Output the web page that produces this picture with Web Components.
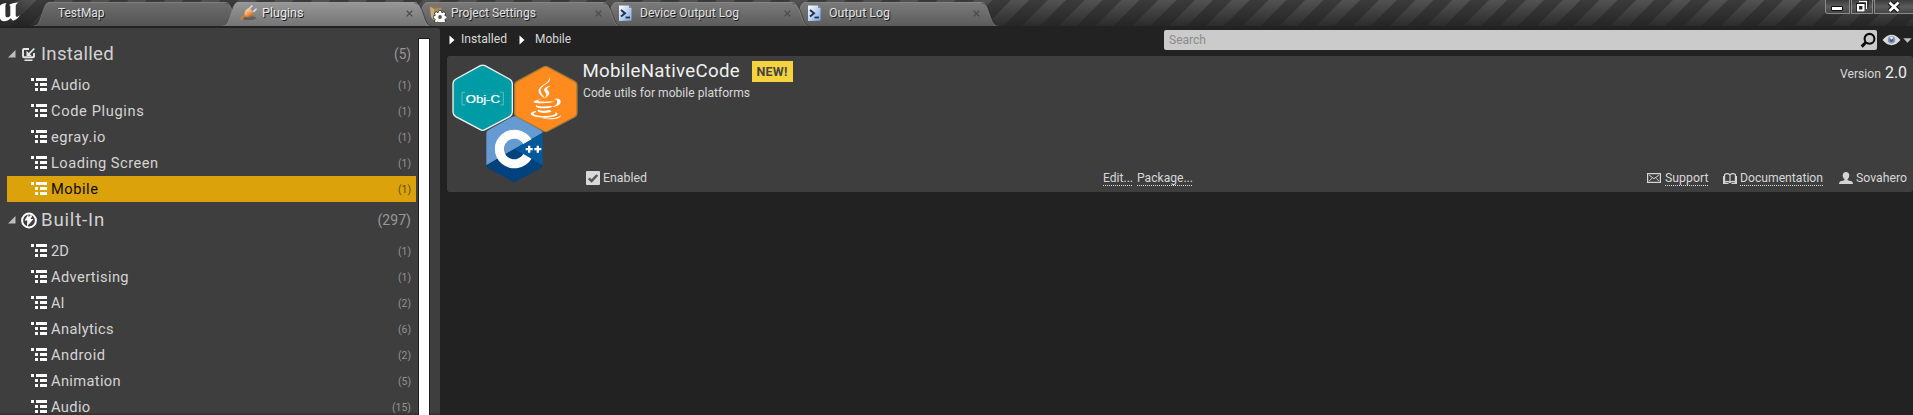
<!DOCTYPE html>
<html lang="en">
<head>
<meta charset="utf-8">
<title>Plugins</title>
<style>
html,body{margin:0;height:100%;overflow:hidden;background:#222}
body{font-family:Roboto,"Noto Sans",sans-serif;font-size:12.6px;color:#d8d8d8}
</style>
</head>
<body>
<plugin-window></plugin-window>
<script>
const define = (name, html, setup) => {
  const tpl = document.createElement('template');
  tpl.innerHTML = html;
  customElements.define(name, class extends HTMLElement {
    constructor() {
      super();
      this.attachShadow({mode: 'open'}).append(tpl.content.cloneNode(true));
    }
    connectedCallback() { if (setup) setup(this, this.shadowRoot); }
  });
};

/* A label with a fixed measure: tracked out or condensed to its width. */
class UiText extends HTMLElement {
  connectedCallback() {
    const root = this.shadowRoot || this.attachShadow({mode: 'open'});
    root.innerHTML = `<style>
      :host{display:block;flex:none;white-space:pre;line-height:1.2}
      span{display:inline-block;transform-origin:0 50%}
    </style><span></span>`;
    const span = root.querySelector('span');
    const text = this.getAttribute('text');
    span.textContent = text;
    const w = parseFloat(this.getAttribute('w'));
    if (!w) return;
    const natural = span.getBoundingClientRect().width;
    this.style.width = w + 'px';
    if (natural < w) span.style.letterSpacing = (w - natural) / text.length + 'px';
    else span.style.transform = `scaleX(${w / natural})`;
  }
}
customElements.define('ui-text', UiText);

const icons = {
  plug: `<svg width="18" height="16" viewBox="0 0 18 16"><defs><linearGradient id="o" x1="0" y1="0" x2=".6" y2="1"><stop offset="0" stop-color="#ffe0b8"/><stop offset=".5" stop-color="#f5b070"/><stop offset="1" stop-color="#b8601c"/></linearGradient></defs><ellipse cx="9" cy="13" rx="7" ry="2" fill="#222" opacity=".35"/><path d="M1.5 13.5L5.5 10" stroke="#d9802c" stroke-width="2.2" stroke-linecap="round"/><path d="M9.3 3.8L11.8 1M13 7.2L16 4.2" stroke="#c9ddf5" stroke-width="1.7" stroke-linecap="round"/><path d="M5 10.6C3.3 7.5 6.2 3.6 9.3 3L14 7.5C13.6 10.8 9.5 13.5 6 12Z" fill="url(#o)"/></svg>`,
  settings: `<svg width="18" height="17" viewBox="0 0 18 17"><path d="M1 1.5L9 .5L10 2L12.5 2.5L12 13L5 15.5L2 12Z" fill="#8d7550"/><path d="M1 1.5L5 4V15.5L2 12Z" fill="#c9ad7d"/><path d="M5 4L12.5 2.5L12 13L5 15.5Z" fill="#a58d66"/><g stroke="#222" stroke-width="1.2" paint-order="stroke" fill="#fff"><path d="M10 6h2l.4 1.6 1.1.5L15 7.2l1.3 1.3-.8 1.4.5 1.1 1.6.4v2l-1.6.4-.5 1.1.8 1.4-1.3 1.3-1.5-.8-1 .4-.5 1h-2l-.4-1.2-1.1-.4-1.4.9-1.3-1.4.8-1.4-.4-1-1.6-.4v-2l1.6-.4.4-1.1-.8-1.4L7.100 7.100l1.400.9 1.100-.4z"/></g><circle cx="11" cy="12" r="1.900" fill="#555"/></svg>`,
  log: `<svg width="14" height="17" viewBox="0 0 14 17"><defs><linearGradient id="l" x1="0" y1="0" x2="1" y2="1"><stop offset="0" stop-color="#fff"/><stop offset="1" stop-color="#7ea6e4"/></linearGradient></defs><path d="M1 .5H11L13.500 3V15.500L1 16Z" fill="url(#l)"/><path d="M11 .5V3h2.500z" fill="#6f86b5"/><path d="M3 5L7 8.200L3 11.500" fill="none" stroke="#26324e" stroke-width="2"/><path d="M7.500 12.500H12" stroke="#26324e" stroke-width="1.800"/></svg>`,
  none: ''
};

define('app-tab', `<style>
  :host{display:grid;width:210px;height:24px;margin-left:-21px;flex:none;
    --top:#7b7b7b;--bottom:#5c5c5c;--text:#e2e2e2}
  :host([muted]){--top:#6e6e6e;--bottom:#545454}
  :host([active]){--top:#989898;--bottom:#757575;--text:#eaeaea}
  .shape,.row{grid-area:1/1}
  .row{display:flex;align-items:center;box-sizing:border-box;height:24px;padding:0 19px 3px 18px}
  .icon{display:flex;width:21.500px;flex:none;padding-top:1px}
  :host([muted]) .icon{width:6.500px}
  ui-text{text-shadow:1px 1px 0 #1a1a1a;color:var(--text);font-size:12.800px}
  .close{margin-left:auto;margin-top:2px}
  :host([muted]) .close{display:none}
</style>
<svg class="shape" width="210" height="24" viewBox="0 0 210 24">
  <defs><linearGradient id="g" x1="0" y1="0" x2="0" y2="1"><stop offset="0" style="stop-color:var(--top)"/><stop offset="1" style="stop-color:var(--bottom)"/></linearGradient></defs>
  <path d="M0 24C6 24 6.500 19 9 12C11.500 5 12 -.5 18 -.5H191C197 -.5 198 5 200.500 12C203 19 204 24 210 24Z" fill="url(#g)"/>
  <path d="M0 24C6 24 6.500 19 9 12C11.500 5 12 .5 18 .5H191C197 .5 198 5 200.500 12C203 19 204 24 210 24" fill="none" stroke="#a5a5a5" stroke-opacity=".3"/>
  <path d="M192.500 1C198 1.500 199 5 201.500 12C204 19 205 23.500 210 24" fill="none" stroke="#2c2c2c" stroke-opacity=".55"/>
</svg>
<div class="row"><span class="icon"></span><ui-text></ui-text>
<svg class="close" width="7" height="7" viewBox="0 0 7 7"><path d="M.7.7l5.600 5.600M6.300.7L.7 6.300" stroke="#484848" stroke-width="1.200"/></svg></div>`,
(el, root) => {
  root.querySelector('.icon').innerHTML = icons[el.getAttribute('icon') || 'none'];
  const t = document.createElement('ui-text');
  t.setAttribute('text', el.getAttribute('label'));
  t.setAttribute('w', el.getAttribute('w'));
  root.querySelector('ui-text').replaceWith(t);
});

define('window-buttons', `<style>
  :host{display:flex;height:14px;width:88px;flex:none}
  div{display:flex;align-items:center;justify-content:center;box-sizing:border-box;height:14px;
    border:1px solid #8b8b8b;border-top:0;background:linear-gradient(#3c3c3c,#5a5a5a 50%,#454545)}
  .a{width:25px;border-bottom-left-radius:3px;margin-right:1px;padding-right:1px}.b{width:22px;margin-right:1px}.c{width:39px;border-right:0;padding-right:1px}
  svg{display:block}
</style>
<div class="a"><svg width="14" height="14" viewBox="0 0 14 14"><path d="M1.500 6.500h11v4h-11z" fill="#fff" stroke="#111"/></svg></div>
<div class="b"><svg width="14" height="14" viewBox="0 0 14 14"><path d="M4.500 1h7v7.500" fill="none" stroke="#111" stroke-width="4"/><path d="M1 3h9v9H1z" fill="#111"/><path d="M4 1.500h7.500V9" fill="none" stroke="#fff" stroke-width="1.300"/><path d="M3 5h5.500v5.500H3z" fill="#222" stroke="#fff" stroke-width="2.200"/></svg></div>
<div class="c"><svg width="14" height="14" viewBox="0 0 14 14"><path d="M2.500 2.500l9 8.500M11.500 2.500l-9 8.500" stroke="#111" stroke-width="5"/><path d="M2.500 2.500l9 8.500M11.500 2.500l-9 8.500" stroke="#fff" stroke-width="2.700"/></svg></div>`);

define('title-bar', `<style>
  :host{display:flex;height:26px;overflow:hidden;
   background:linear-gradient(rgba(30,30,30,0) 0,rgba(30,30,30,.75) 100%),
   repeating-linear-gradient(135deg,#3b3b3b 0,#3b3b3b 12.500px,#525252 13.500px,#525252 25.500px,#3b3b3b 26px)}
  .logo{width:33px;flex:none;background:linear-gradient(90deg,#2228,#2220)}
  .tabs{display:flex;padding:2px 0 0 21px;flex:1}
</style>
<div class="logo"><svg width="24" height="26" viewBox="0 0 24 26"><path d="M0 5.500C1.500 3.800 4 3.200 6.500 3.200C5.600 4.200 5.400 5 5.400 6.200V15C5.400 16.800 6.600 17.600 8 17.300C9 17 9.700 16.500 10.300 15.800V6.500C10.300 5.600 9.800 5 9 4.900C11 3.300 14 2.800 18.500 2.500C16.700 3.700 15.700 4.700 15.700 6V15.200C15.700 16.500 16.500 17 17.400 16.700C18.400 16.400 19.200 15.700 20 15C18.700 17.700 16.300 19.600 13 20.700L10.700 18.300C8.900 20.200 6.600 21.200 4 21.200C1.500 21.200 0 19.700 0 18Z" fill="#fff"/></svg></div>
<div class="tabs">
 <app-tab muted label="TestMap" w="46.500" style="z-index:1"></app-tab>
 <app-tab active icon="plug" label="Plugins" w="41.500" style="z-index:9"></app-tab>
 <app-tab icon="settings" label="Project Settings" w="85" style="z-index:5"></app-tab>
 <app-tab icon="log" label="Device Output Log" w="99" style="z-index:4"></app-tab>
 <app-tab icon="log" label="Output Log" w="61" style="z-index:3"></app-tab>
</div>
<window-buttons></window-buttons>`);

define('category-item', `<style>
  :host{display:flex;align-items:center;height:26px;margin:0 2px 0 7px;padding:0 5px 0 24px;color:#d4d4d4}
  :host([selected]){background:#dca20b;color:#0c0c0c}
  svg{flex:none;margin-right:4px}
  ui-text{padding-top:1px;line-height:1}
  .n{font-size:14.670px}
  .c{font-size:11px;margin-left:auto;color:#939393}
  :host([selected]) .c{color:#614a0c}
</style>
<svg width="16" height="14" viewBox="0 0 16 14" fill="#fff"><path d="M0 0h3v3H0zM5 0h11v3H5zM4 5h3v3H4zM9 5h7v3H9zM4 10h3v3H4zM9 10h7v3H9z"/></svg>`,
(el, root) => {
  root.innerHTML += `<ui-text class="n" text="${el.getAttribute('name')}" w="${el.getAttribute('w')}"></ui-text>
  <ui-text class="c" text="(${el.getAttribute('count')})" w="${el.getAttribute('count').length > 1 ? 19 : 13}"></ui-text>`;
});

define('category-group', `<style>
  :host{display:block}
  header{display:flex;align-items:center;height:36px;padding:0 7px 0 8px;color:#d2d2d2}
  .arrow{margin:0 5px 0 0}
  .icon{display:flex;width:20px;flex:none}
  .n{font-size:18.670px}
  .c{font-size:14px;margin-left:auto;color:#989898}
</style>
<header><svg class="arrow" width="8" height="8" viewBox="0 0 8 8"><path d="M7.500 0V7.500H0z" fill="#bdbdbd"/></svg><span class="icon"><slot name="icon"></slot></span></header>
<slot></slot>`,
(el, root) => {
  const h = root.querySelector('header');
  h.insertAdjacentHTML('beforeend', `<ui-text class="n" text="${el.getAttribute('name')}" w="${el.getAttribute('w')}"></ui-text>
  <ui-text class="c" text="(${el.getAttribute('count')})" w="${el.getAttribute('cw')}"></ui-text>`);
});

define('category-panel', `<style>
  :host{display:flex;width:440px;height:387px;flex:none;background:linear-gradient(#363335,#363335) 0 100%/100% 2px no-repeat #3e3e3e;border-radius:0 3px 0 0;overflow:hidden}
  .tree{width:418px;padding-top:8px;flex:none;box-sizing:border-box}
  .bar{width:10px;flex:none;margin-top:10px;border:1px solid #1d1d1d;border-bottom:0;background:#fff}
  category-group svg{display:block}
</style>
<div class="tree">
<category-group name="Installed" w="73" count="5" cw="17">
 <svg slot="icon" width="15" height="15" viewBox="0 0 15 15" fill="none" stroke="#e8e8e8"><path d="M8 2H3Q2 2 2 3V9Q2 10.300 3 10.300H12Q13 10.300 13 9.500V6" stroke-width="1.900"/><path d="M3.500 13.300h8" stroke-width="1.600"/><path d="M13.300 1.500L8 6.800" stroke-width="1.700"/><path d="M5.500 3.800V9H10.700z" fill="#e8e8e8" stroke="none"/></svg>
 <category-item name="Audio" w="39.500" count="1"></category-item>
 <category-item name="Code Plugins" w="93.500" count="1"></category-item>
 <category-item name="egray.io" w="55" count="1"></category-item>
 <category-item name="Loading Screen" w="107.500" count="1"></category-item>
 <category-item name="Mobile" w="47.500" count="1" selected></category-item>
</category-group>
<category-group name="Built-In" w="64" count="297" cw="33.500">
 <svg slot="icon" width="16" height="17" viewBox="0 0 16 17"><circle cx="8" cy="8.500" r="6.900" fill="#3e3e3e" stroke="#fff" stroke-width="2"/><path d="M7.200 2.500L3.500 8.500H6.300L6 14.500L12.500 7H9.500L11.500 3.500L9 3.200L7.800 5.500Z" fill="#fff"/></svg>
 <category-item name="2D" w="18" count="1"></category-item>
 <category-item name="Advertising" w="78" count="1"></category-item>
 <category-item name="AI" w="13.500" count="2"></category-item>
 <category-item name="Analytics" w="63" count="6"></category-item>
 <category-item name="Android" w="54.500" count="2"></category-item>
 <category-item name="Animation" w="70" count="5"></category-item>
 <category-item name="Audio" w="39.500" count="15"></category-item>
</category-group>
</div>
<div class="bar"></div>`);

define('bread-crumbs', `<style>
  :host{display:flex;align-items:center;height:22px}
  svg{flex:none}
</style>
<svg width="6" height="10" viewBox="0 0 6 10" style="margin:1px 6px 0 0"><path d="M.5.5L5.500 5L.5 9.500z" fill="#fff"/></svg>
<ui-text text="Installed" w="46"></ui-text>
<svg width="6" height="10" viewBox="0 0 6 10" style="margin:1px 10px 0 12px"><path d="M.5.5L5.500 5L.5 9.500z" fill="#fff"/></svg>
<ui-text text="Mobile" w="36"></ui-text>`);

define('search-box', `<style>
  :host{display:flex;align-items:center;justify-content:space-between;box-sizing:border-box;width:713px;height:20px;background:#cbcbcb;border-radius:2px;padding:0 1px 0 4.500px;color:#8b8b8b}
  ui-text{margin-top:-1px}
</style>
<ui-text text="Search" w="37"></ui-text>
<svg width="16" height="16" viewBox="0 0 16 16" fill="none" stroke="#0b0b0b"><circle cx="9.500" cy="6.800" r="4.900" stroke-width="2.100"/><path d="M6 10.300L1.700 14.600" stroke-width="3"/></svg>`);

define('view-options', `<style>:host{display:flex;align-items:center;width:30px;height:20px;justify-content:space-between}</style>
<svg width="19" height="12" viewBox="0 0 19 12"><path d="M.5 6Q5 .8 9.500.8T18.500 6Q14 11.200 9.500 11.200T.5 6z" fill="#dcdcdc"/><circle cx="9.500" cy="5.800" r="3.800" fill="#8499bd"/><circle cx="9.500" cy="6" r="2" fill="#485a80"/><circle cx="9.500" cy="4" r="1.400" fill="#dfe8f5"/></svg>
<svg width="9" height="5" viewBox="0 0 9 5"><path d="M.3.300h8.400L4.500 4.700z" fill="#c0c0c0"/></svg>`);

define('check-box', `<style>
  :host{display:flex;align-items:center}
  svg{margin-right:3.200px}
</style>
<svg width="14" height="14" viewBox="0 0 14 14"><rect width="14" height="14" rx="1" fill="#d9d9d9"/><path d="M2.800 7.300L5.600 10L11.200 4" fill="none" stroke="#555" stroke-width="2.500"/></svg>
<slot></slot>`);

define('hyper-link', `<style>
  :host{display:block;height:16px;background:repeating-linear-gradient(90deg,#dcdcdc 0 1px,#3e3e3e 1px 2px) 0 100%/100% 1px no-repeat}
</style><slot></slot>`);

define('plugin-emblem', `<style>:host{display:block;width:126px;height:119px}svg{display:block}text{font-family:"Liberation Sans",Arial,sans-serif}</style>
<svg width="126" height="119" viewBox="36 12 378 357">
 <path d="M121 17Q128 14 135 17L208 57Q217 62 217 71V156Q217 165 209 170L135 209Q128 213 121 209L47 170Q39 165 39 156V71Q39 62 48 57Z" fill="#009ca6" stroke="#f2f2f2" stroke-width="4"/>
 <text x="77" y="128" font-size="34" fill="#fff" stroke="#fff" stroke-width=".7" textLength="103" lengthAdjust="spacingAndGlyphs">Obj-C</text>
 <path d="M75 97H66V135H75M181 97H190V135H181" fill="none" stroke="#5ac0c6" stroke-width="3"/>
 <path d="M310 21Q317 17 324 21L404 64Q411 68 411 75V160Q411 167 404 171L324 213Q317 217 310 213L231 171Q224 167 224 160V75Q224 68 231 64Z" fill="#ff8a1d" stroke="#a07a38" stroke-width="4"/>
 <g fill="#fff"><path d="M328 52C338 70 299 77 302 93C303 102 311 106 314 115C300 106 293 98 297 87C303 74 329 70 328 52Z"/><path d="M332 77C313 81 310 87 315 96C322 104 319 108 313 116C331 105 331 98 323 91C319 86 323 82 332 77Z"/>
 <path d="M304 118C270 124 276 130 306 130C324 130 337 128 345 124C332 125 309 126 295 124C292 122 297 120 304 118Z"/>
 <path d="M339 119C350 115 354 124 350 131C347 136 341 139 336 141C355 140 363 132 362 124C361 116 350 112 339 119Z"/>
 <path d="M291 134C281 140 292 145 312 145C323 145 332 143 338 140L331 137C318 140 302 140 295 138C290 137 289 136 291 134Z"/>
 <path d="M297 148C287 153 296 159 313 159C322 159 331 157 335 154L328 150C317 153 305 153 298 151C296 150 296 149 297 148Z"/>
 <path d="M288 153C259 158 270 172 313 173C347 173 363 163 346 156C351 164 335 168 313 168C289 168 271 163 288 156Z"/>
 <path d="M362 164C361 172 341 176 306 175C327 181 367 178 362 164Z"/></g>
 <path d="M217 170Q223 167 229 170L302 211Q307 214 308 218L223 267L139 316V218Q140 213 145 210Z" fill="#659ad2"/>
 <path d="M139 316L223 267L308 316Q307 321 301 325L229 364Q223 367 217 364L145 325Q140 321 139 316Z" fill="#00427e"/>
 <path d="M308 218L223 267L308 316Z" fill="#00599c"/>
 <path d="M274.500 238A59 58 0 1 0 274.500 296L250 282A31 31 0 1 1 250 252Z" fill="#fff"/>
 <path d="M264 257h7v7h7v7h-7v7h-7v-7h-7v-7h7zM290 257h7v7h7v7h-7v7h-7v-7h-7v-7h7z" fill="#fff"/>
</svg>`);

define('plugin-card', `<style>
  :host{display:flex;box-sizing:border-box;height:136px;background:#3e3e3e;border-radius:3px;padding:0 6px 0 5px}
  .body{display:flex;flex-direction:column;flex:1;margin-left:4.500px}
  plugin-emblem{margin-top:8px;flex:none}
  .top{display:flex;justify-content:space-between;height:30px}
  .name{display:flex}
  .name>ui-text{font-size:18.670px;color:#f0f0f0;margin-top:4px}
  .new{display:flex;align-items:center;justify-content:center;width:41px;height:21px;margin:5px 0 0 11.500px;background:#f5d33e;color:#444;font-weight:700;font-size:12.500px}
  .ver{display:flex;align-items:baseline;gap:4px;padding-top:7px}
  .ver .v{font-size:16px;color:#f0f0f0}
  .desc{margin-top:-1px;flex:1}
  .foot{display:grid;grid-template-columns:520px 1fr auto;align-items:center;height:16px;margin-bottom:6px}
  .foot>div,.foot span{display:flex;align-items:center}
  check-box{margin-left:3px}
  .mid{gap:4px}
  .right{gap:14.500px}
  span>svg{margin-right:3.500px;flex:none}
  .user{margin-left:1px}
</style>
<plugin-emblem></plugin-emblem>
<div class="body">
 <div class="top">
  <div class="name"><ui-text text="MobileNativeCode" w="157.500"></ui-text><div class="new"><ui-text text="NEW!" w="31"></ui-text></div></div>
  <div class="ver"><ui-text text="Version" w="41"></ui-text><ui-text class="v" text="2.0" w="22"></ui-text></div>
 </div>
 <ui-text class="desc" text="Code utils for mobile platforms" w="167"></ui-text>
 <div class="foot">
  <check-box><ui-text text="Enabled" w="44"></ui-text></check-box>
  <div class="mid"><hyper-link><ui-text text="Edit..." w="30"></ui-text></hyper-link><hyper-link><ui-text text="Package..." w="56"></ui-text></hyper-link></div>
  <div class="right">
   <span><svg width="14" height="10" viewBox="0 0 14 10" fill="none" stroke="#d5d5d5"><path d="M.6.6h12.800v8.800H.6z" stroke-width="1.200"/><path d="M2.200 2.200L7 5.700L11.800 2.200M2.200 8L5 5.200M11.800 8L9 5.200"/></svg><hyper-link><ui-text text="Support" w="43.500"></ui-text></hyper-link></span>
   <span><svg width="14" height="11" viewBox="0 0 14 11" fill="none" stroke="#d5d5d5" stroke-width="1.200"><path d="M7 9.500V2Q4.500-.3 1.600 1.500V9Q4.500 7.500 7 9.500Q9.500 7.500 12.400 9V1.500Q9.500-.3 7 2M.6 3V10.300H5.500M13.400 3V10.300H8.500"/></svg><hyper-link><ui-text text="Documentation" w="83"></ui-text></hyper-link></span>
   <span class="user"><svg width="14" height="12" viewBox="0 0 14 12" fill="#d5d5d5"><path d="M7 0C9 0 10.300 1.300 10.300 3.200C10.300 4.900 9.500 6.300 8.600 7V8.200L12.500 9.300Q14 9.900 14 12H0Q0 9.900 1.500 9.300L5.400 8.200V7C4.500 6.300 3.700 4.900 3.700 3.200C3.700 1.300 5 0 7 0z"/></svg><ui-text text="Sovahero" w="51"></ui-text></span>
  </div>
 </div>
</div>`);

define('plugin-window', `<style>
  :host{display:flex;flex-direction:column;width:1913px;height:415px;background:#222;overflow:hidden}
  .content{display:flex;padding-top:2px}
  main{flex:1;padding-left:7px}
  nav{display:flex;align-items:flex-start;height:28px;padding:0 1px 0 2px;box-sizing:border-box}
  search-box{margin:2px 5px 0 auto} view-options{margin-top:2px}
</style>
<title-bar></title-bar>
<div class="content"><category-panel></category-panel>
<main><nav><bread-crumbs></bread-crumbs><search-box></search-box><view-options></view-options></nav><plugin-card></plugin-card></main></div>`);
</script>
</body>
</html>
